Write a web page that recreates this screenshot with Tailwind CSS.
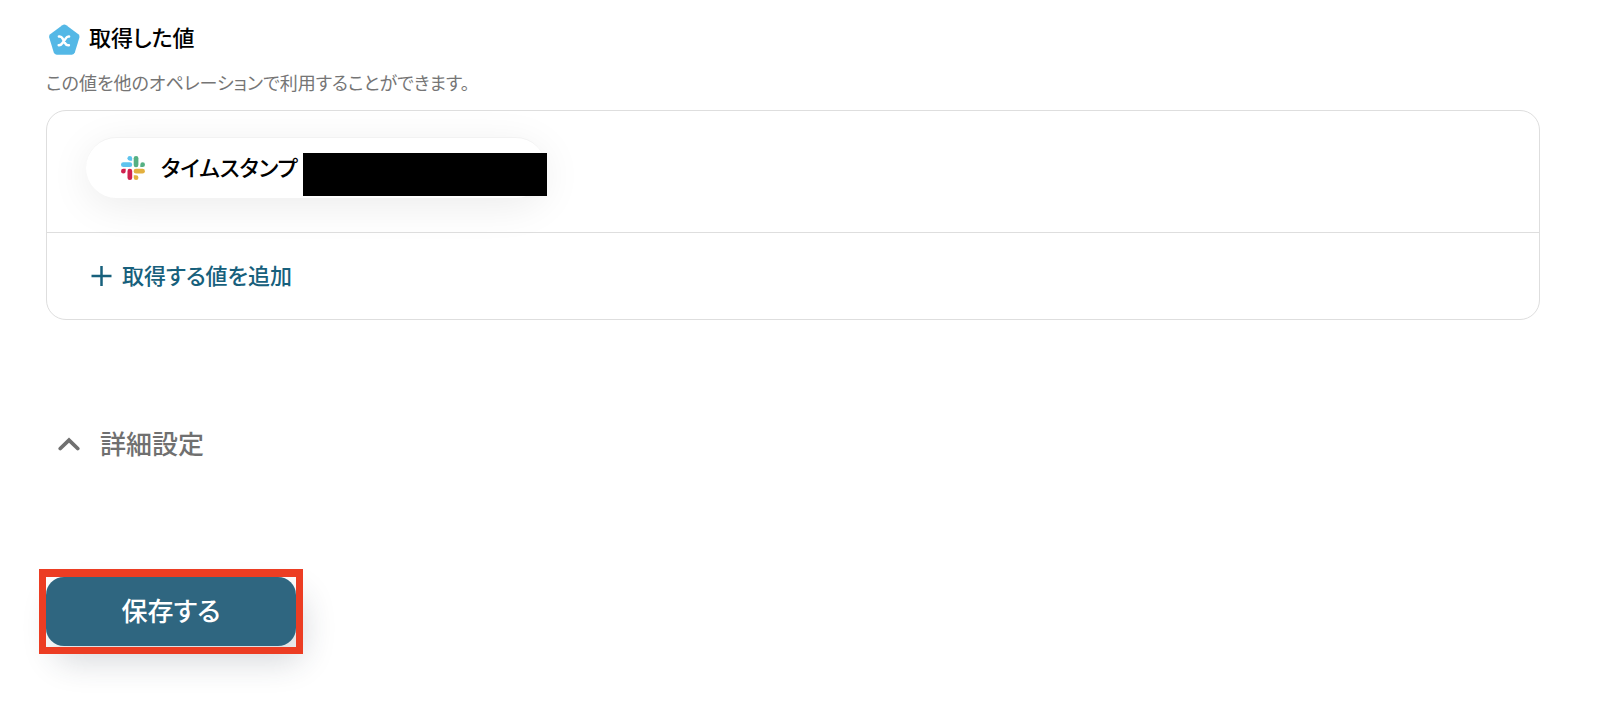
<!DOCTYPE html>
<html lang="ja">
<head>
  <meta charset="UTF-8">
  <title>取得した値</title>
  <meta name="viewport" content="width=device-width, initial-scale=1.0">
  <script src="https://cdn.jsdelivr.net/npm/@tailwindcss/browser@4"></script>
</head>
<body class="min-h-screen bg-white text-black font-['Noto_Sans_CJK_JP',sans-serif] [font-feature-settings:'palt']">

  <main class="pl-[46px] pr-15 pt-5 pb-14">

    <!-- 取得した値 -->
    <section>
      <h1 class="flex items-center gap-[9px] pl-0.5 h-9 text-[22px] font-medium">
        <svg class="size-8 mt-1" viewBox="0 0 32 32" aria-hidden="true">
          <path d="M14.3 1.2Q16.3 0 18.3 1.2L30.4 10.2Q32 11.500 31.400 13.500L26.900 28.3Q26.100 30.7 23.900 30.7H8.700Q6.500 30.7 5.700 28.3L1.200 13.5Q.6 11.500 2.200 10.2Z" fill="#54b8e6"/>
          <path d="M10.900 12.600Q13.300 12.200 14.500 14.400L17.200 19.300Q18.400 21.500 20.900 21.200M21.100 12.600Q19 12.400 17.600 14.600L14.500 19Q12.900 21.400 10.700 21.200" fill="none" stroke="#fff" stroke-width="2.500" stroke-linecap="round"/>
        </svg>
        <span class="pb-1">取得した値</span>
      </h1>
      <p class="mt-3 text-[18px] leading-7 text-[#757575]">この値を他のオペレーションで利用することができます。</p>

      <div class="mt-3.5 rounded-[20px] border border-[#dedede] overflow-hidden">
        <div class="h-[122px] pl-[39px] pt-[26px] border-b border-[#dedede]">
          <div class="relative flex items-center w-[460px] h-[61px] pl-[35px] rounded-full bg-white border-t border-[#f2f2f2] text-[22px] font-medium shadow-[0_8px_40px_rgba(0,0,0,0.08)]">
            <svg class="size-6 mr-4" viewBox="0 0 24 24" aria-hidden="true">
              <g fill="#5ec3ee"><rect x="0" y="6.300" width="11.200" height="4.700" rx="2.300"/><path d="M8.800 0a2.350 2.350 0 0 1 2.350 2.350v2.350H8.800a2.350 2.350 0 0 1 0-4.700z"/></g>
              <g fill="#55b083"><rect x="12.700" y="0" width="4.700" height="11.200" rx="2.300"/><path d="M24 8.700a2.350 2.350 0 0 1-2.350 2.350H19.300V8.700a2.350 2.350 0 0 1 4.700 0z"/></g>
              <g fill="#e3b03e"><rect x="12.700" y="12.800" width="11.200" height="4.700" rx="2.300"/><path d="M15.100 24a2.350 2.350 0 0 1-2.350-2.350V19.300h2.350a2.350 2.350 0 0 1 0 4.700z"/></g>
              <g fill="#d0214f"><rect x="6.500" y="12.800" width="4.700" height="11.200" rx="2.300"/><path d="M0 15.150a2.350 2.350 0 0 1 2.350-2.350H4.700v2.350a2.350 2.350 0 0 1-4.700 0z"/></g>
            </svg>
            <span class="pb-1">タイムスタンプ</span>
            <!-- 伏せ字 -->
            <span class="absolute left-[217px] top-[15px] w-[244px] h-[43px] bg-black"></span>
          </div>
        </div>
        <button type="button" class="flex items-center gap-2 w-full h-[86px] pl-[43px] text-[22px] font-medium text-[#17607c]">
          <svg class="size-6" viewBox="0 0 24 24" fill="none" stroke="currentColor" stroke-width="2.500" aria-hidden="true"><path d="M11.500 2v20M1.500 12h20"/></svg>
          <span class="pb-1">取得する値を追加</span>
        </button>
      </div>
    </section>

    <!-- 詳細設定 -->
    <button type="button" class="flex items-center gap-5 mt-[106px] pl-3 h-9 text-[26px] font-medium text-[#707070]">
      <svg class="w-[22px] h-[14px]" viewBox="0 0 22 14" fill="none" stroke="currentColor" stroke-width="3.800" stroke-linecap="round" aria-hidden="true"><path d="M2.300 11.500L11 3.200l8.700 8.300"/></svg>
      <span class="pb-1">詳細設定</span>
    </button>

    <!-- 保存ボタン -->
    <div class="mt-[107px] -ml-[7px] w-[264px] h-[85px] px-[7px] pt-2 relative">
      <button type="submit" class="w-full h-[69px] rounded-[18px] bg-[#2f6680] text-white text-[26px] font-medium shadow-[8px_16px_32px_rgba(40,50,65,0.18)]"><span class="block pb-1">保存する</span></button>
      <span class="absolute inset-0 border-[7px] border-t-8 border-[#ec3d23] pointer-events-none"></span>
    </div>

  </main>
</body>
</html>
